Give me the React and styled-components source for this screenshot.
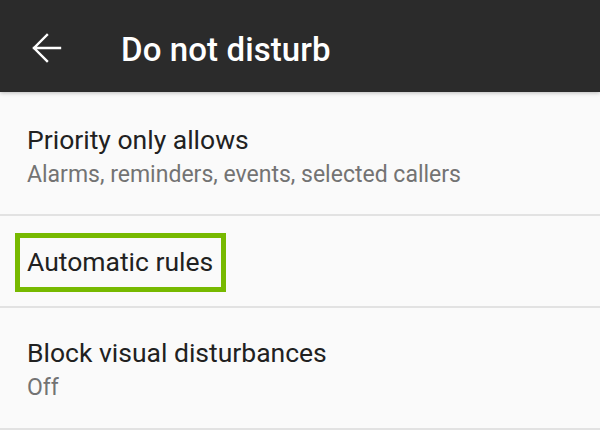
import React from "react";
import styled, { createGlobalStyle } from "styled-components";

const GlobalStyle = createGlobalStyle`
  html, body {
    margin: 0;
    padding: 0;
    background: #fafafa;
    font-family: Roboto, "Noto Sans", sans-serif;
  }
`;

const Screen = styled.div`
  width: 600px;
  height: 430px;
  overflow: hidden;
  background: #fafafa;
  display: flex;
  flex-direction: column;
`;

const Toolbar = styled.header`
  height: 92px;
  flex-shrink: 0;
  background: #2b2b2b;
  display: flex;
  align-items: center;
  box-shadow: 0 1px 4px rgba(0, 0, 0, 0.25);
  position: relative;
  z-index: 1;
`;

const BackButton = styled.button`
  width: 94px;
  height: 92px;
  padding: 4px 0 0;
  border: 0;
  background: transparent;
  display: flex;
  align-items: center;
  justify-content: center;
  margin-right: 27px;
  cursor: pointer;
`;

const Title = styled.h1`
  margin: 7px 0 0;
  color: #ffffff;
  font-size: 33px;
  font-weight: 500;
  letter-spacing: 0.1px;
`;

const List = styled.div`
  display: flex;
  flex-direction: column;
`;

const Item = styled.div`
  height: ${(p) => p.height}px;
  border-bottom: 2px solid #e2e2e2;
  display: flex;
  flex-direction: column;
  justify-content: center;
  padding-left: 27px;
  padding-top: ${(p) => p.offset || 0}px;
  box-sizing: border-box;
`;

const Label = styled.span`
  display: inline-block;
  align-self: flex-start;
  font-size: 26.5px;
  color: #212121;
  line-height: 32px;
  ${(p) =>
    p.highlighted &&
    `
    border: 5px solid #77b900;
    margin-left: -12px;
    padding: 8px 8px 9px 7px;
  `}
`;

const Summary = styled.span`
  font-size: 23px;
  color: #737373;
  line-height: 34px;
  margin-top: 2px;
`;

const BackArrow = () => (
  <svg width="40" height="40" viewBox="0 0 40 40" fill="none">
    <path
      d="M7 20h26M20 7L7 20l13 13"
      stroke="#ffffff"
      strokeWidth="2.4"
      strokeLinecap="square"
    />
  </svg>
);

const items = [
  { label: "Priority only allows", summary: "Alarms, reminders, events, selected callers", height: 124, offset: 10 },
  { label: "Automatic rules", height: 92, offset: 2, highlighted: true },
  { label: "Block visual disturbances", summary: "Off", height: 122, offset: 6 }
];

export default function App() {
  return (
    <Screen>
      <GlobalStyle />
      <Toolbar>
        <BackButton aria-label="Back">
          <BackArrow />
        </BackButton>
        <Title>Do not disturb</Title>
      </Toolbar>
      <List>
        {items.map((item) => (
          <Item key={item.label} height={item.height} offset={item.offset}>
            <Label highlighted={item.highlighted}>{item.label}</Label>
            {item.summary && <Summary>{item.summary}</Summary>}
          </Item>
        ))}
      </List>
    </Screen>
  );
}
